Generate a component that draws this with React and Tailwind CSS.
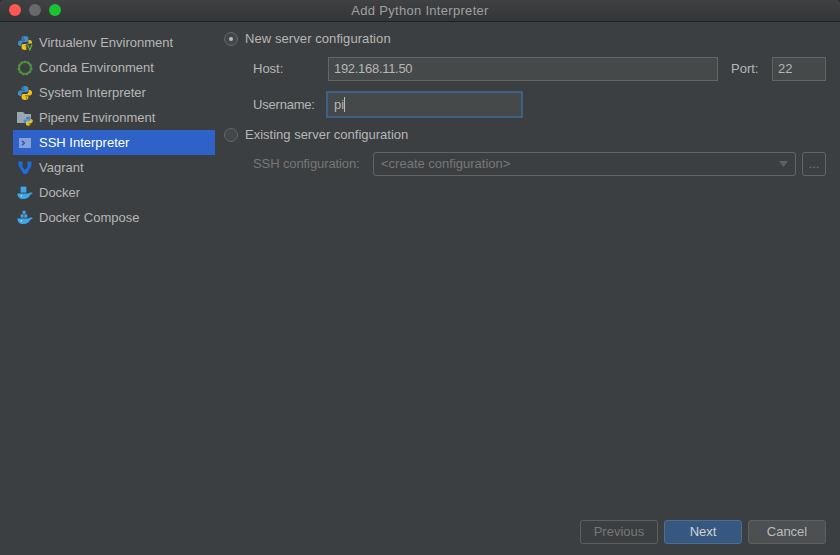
import React from "react";

const items = [
  { label: "Virtualenv Environment", icon: "venv" },
  { label: "Conda Environment", icon: "conda" },
  { label: "System Interpreter", icon: "python" },
  { label: "Pipenv Environment", icon: "pipenv" },
  { label: "SSH Interpreter", icon: "ssh", active: true },
  { label: "Vagrant", icon: "vagrant" },
  { label: "Docker", icon: "docker" },
  { label: "Docker Compose", icon: "compose" },
];

// python logo, two interlocked snakes
const PythonLogo = () => (
  <>
    <path d="M7.9 1C5.2 1 4.6 2 4.6 3.2V4.8H8V5.4H3.2C1.9 5.4 1 6.5 1 8.2C1 10 1.9 11 3.1 11H4.4V9.4C4.4 8 5.4 7.1 6.7 7.1H9.7C10.8 7.1 11.4 6.3 11.4 5.3V3.2C11.4 2 10.4 1 7.9 1Z" fill="#3d8fc9" />
    <path d="M8.1 15C10.8 15 11.4 14 11.4 12.8V11.2H8V10.6H12.8C14.1 10.6 15 9.5 15 7.8C15 6 14.1 5 12.9 5H11.6V6.6C11.6 8 10.6 8.9 9.3 8.9H6.3C5.2 8.9 4.6 9.7 4.6 10.7V12.8C4.6 14 5.6 15 8.1 15Z" fill="#f2c118" />
    <circle cx="6.3" cy="2.9" r="0.7" fill="#3c3f41" />
    <circle cx="9.7" cy="13.1" r="0.7" fill="#3c3f41" />
  </>
);

const Docker = ({ compose }) => (
  <>
    {compose ? (
      <>
        <rect x="5.6" y="0.8" width="3" height="3" fill="#40a6e8" />
        <rect x="3.6" y="4.4" width="3" height="3.2" fill="#40a6e8" />
        <rect x="7.2" y="4.4" width="3" height="3.2" fill="#40a6e8" />
      </>
    ) : (
      <rect x="3.6" y="1.6" width="5.8" height="6" fill="#40a6e8" />
    )}
    <path d="M0.4 8.4H11.2C11.8 7.8 12.4 7.6 13.2 7.8C13.6 7.4 14.2 7.4 15.7 8C15.2 9 14.4 9.4 13.5 9.4C12.5 12 10.2 14 6.4 14C2.4 14 0.4 11.6 0.4 8.4Z" fill="#40a6e8" />
    <circle cx="4.4" cy="10.8" r="0.7" fill="#d5ebfa" />
  </>
);

const SidebarIcon = ({ name }) => (
  <svg width="16" height="16" viewBox="0 0 16 16" className="shrink-0">
    {name === "python" && <PythonLogo />}
    {name === "venv" && (
      <>
        <PythonLogo />
        <rect x="9.5" y="8.5" width="7" height="7.5" fill="#3c3f41" />
        <path d="M10.5 9.5L12.8 15L15 9.5" fill="none" stroke="#62b543" strokeWidth="1.2" />
      </>
    )}
    {name === "conda" && (
      <>
        <circle cx="8" cy="8" r="6" fill="none" stroke="#4a8f3c" strokeWidth="2.2" />
        <circle cx="8" cy="8" r="7" fill="none" stroke="#7ba36f" strokeWidth="0.8" strokeDasharray="1.5 2.5" />
      </>
    )}
    {name === "pipenv" && (
      <>
        <path d="M0 2H6L8 4H14V13H0Z" fill="#9aa7b0" />
        <g transform="translate(6 6) scale(0.65)">
          <PythonLogo />
        </g>
      </>
    )}
    {name === "ssh" && (
      <>
        <rect x="2" y="3" width="12" height="10" fill="#9ab3dd" fillOpacity="0.8" />
        <path d="M5 5.8L7.2 8L5 10.2" fill="none" stroke="#2a5cb8" strokeWidth="1.6" />
      </>
    )}
    {name === "vagrant" && (
      <path d="M1.5 1.5H5.5V7L8 10L10.5 7V1.5H14.5V5.5L9.6 14H6.6L1.5 5.5Z" fill="#1a6ee0" />
    )}
    {name === "docker" && <Docker />}
    {name === "compose" && <Docker compose />}
  </svg>
);

const Radio = ({ checked }) => (
  <span className="w-[14px] h-[14px] rounded-full border border-[#646769] bg-[#43474a] flex items-center justify-center shrink-0">
    {checked && <span className="w-[4px] h-[4px] rounded-full bg-[#bbbbbb]" />}
  </span>
);

const App = () => {
  return (
    <div className="w-[840px] h-[555px] bg-[#26282a]">
      <div
        className="w-full h-full flex flex-col rounded-t-[4px] bg-[#3c3f41] text-[#b6b6b6] text-[13px] overflow-hidden"
        style={{ fontFamily: '"Liberation Sans", sans-serif' }}
      >
        {/* title bar */}
        <div className="relative h-[22px] shrink-0 flex items-center justify-center bg-gradient-to-b from-[#3f4143] to-[#333537] border-b border-[#1e1f20]">
          <div className="absolute left-[9px] top-[4px] flex gap-[8px]">
            <span className="w-[12px] h-[12px] rounded-full bg-[#fc5753]" />
            <span className="w-[12px] h-[12px] rounded-full bg-[#67696b]" />
            <span className="w-[12px] h-[12px] rounded-full bg-[#19c332]" />
          </div>
          <span className="text-[#9fa1a2] tracking-[0.3px]">Add Python Interpreter</span>
        </div>

        <div className="flex-1 flex min-h-0">
          {/* sidebar */}
          <div className="w-[215px] shrink-0 pl-[13px] pt-[8px]">
            {items.map((item) => (
              <div
                key={item.label}
                className={`h-[25px] flex items-center gap-[6px] pl-[4px] ${
                  item.active ? "bg-[#2e62c8] text-white" : ""
                }`}
              >
                <SidebarIcon name={item.icon} />
                <span className="whitespace-nowrap">{item.label}</span>
              </div>
            ))}
          </div>

          {/* form */}
          <div className="flex-1 flex flex-col pl-[9px] pr-[14px]">
            <div className="flex items-center gap-[7px] h-[18px] mt-[8px]">
              <Radio checked />
              <span className="tracking-[0.08px]">New server configuration</span>
            </div>

            <div className="flex items-center h-[24px] mt-[9px] pl-[29px]">
              <span className="w-[75px] shrink-0">Host:</span>
              <div className="flex-1 h-full px-[5px] flex items-center bg-[#45494a] border border-[#646464] tracking-[-0.3px]">
                192.168.11.50
              </div>
              <span className="ml-[13px] w-[41px] shrink-0">Port:</span>
              <div className="w-[54px] h-full px-[5px] flex items-center bg-[#45494a] border border-[#646464]">
                22
              </div>
            </div>

            <div className="flex items-center h-[27px] mt-[10px] pl-[29px]">
              <span className="w-[73px] shrink-0 tracking-[-0.2px]">Username:</span>
              <div className="w-[197px] h-full px-[6px] flex items-center bg-[#45494a] border-[2px] border-[#3d6185] rounded-[1px]">
                pi
                <span className="w-px h-[15px] bg-[#bbbbbb]" />
              </div>
            </div>

            <div className="flex items-center gap-[7px] h-[18px] mt-[8px]">
              <Radio />
              <span>Existing server configuration</span>
            </div>

            <div className="flex items-center h-[24px] mt-[8px] pl-[29px] text-[#777777]">
              <span className="w-[120px] shrink-0 tracking-[-0.1px]">SSH configuration:</span>
              <div className="flex-1 h-full px-[7px] flex items-center justify-between border border-[#646464] rounded-[3px]">
                <span>&lt;create configuration&gt;</span>
                <svg width="9" height="6" viewBox="0 0 9 6">
                  <path d="M0 0H9L4.5 6Z" fill="#5f6264" />
                </svg>
              </div>
              <div className="ml-[6px] w-[24px] h-full flex items-center justify-center border border-[#646464] rounded-[3px]">
                ...
              </div>
            </div>

            {/* footer buttons */}
            <div className="mt-auto mb-[11px] flex justify-end gap-[6px]">
              <button className="w-[78px] h-[24px] border border-[#5e6060] rounded-[3px] text-[#777777]">
                Previous
              </button>
              <button className="w-[78px] h-[24px] border border-[#4c708c] rounded-[3px] bg-[#365880] text-[#d0d3d6]">
                Next
              </button>
              <button className="w-[78px] h-[24px] border border-[#5e6060] rounded-[3px] bg-[#4c5052] text-[#bbbbbb]">
                Cancel
              </button>
            </div>
          </div>
        </div>
      </div>
    </div>
  );
};

export default App;
